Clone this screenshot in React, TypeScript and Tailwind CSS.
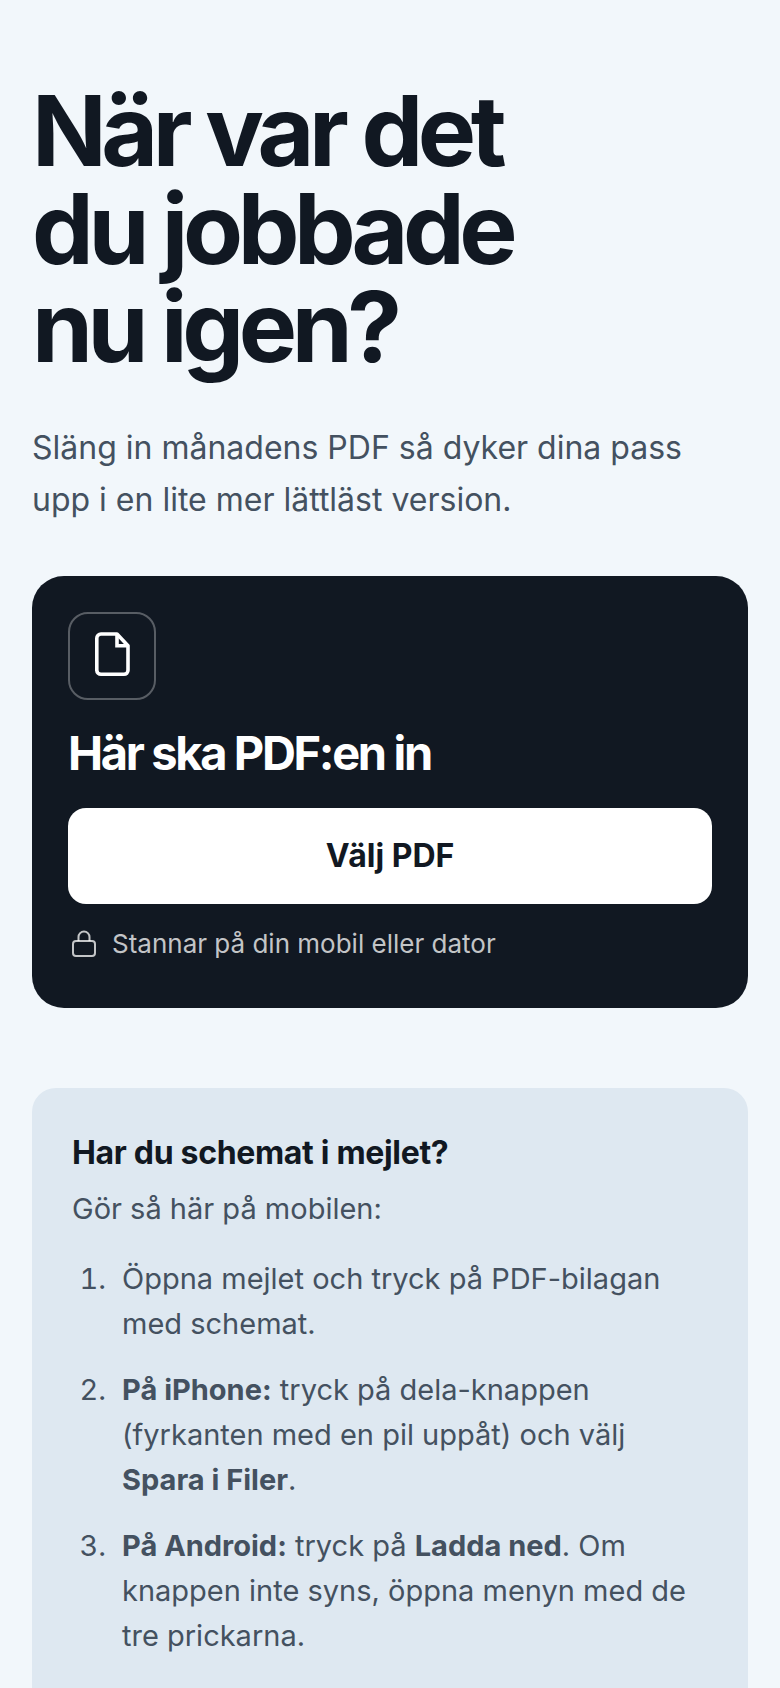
import type { ReactNode } from 'react';

function FileIcon() {
  return (
    <svg viewBox="0 0 48 48" className="size-12" fill="none" stroke="currentColor" strokeWidth="3.6" strokeLinejoin="round" aria-hidden="true">
      <path d="M13 2H29L40 13.700V38.300a4 4 0 0 1-4 4H13a4.200 4.200 0 0 1-4.200-4V6.200A4.200 4.200 0 0 1 13 2Z" />
      <path d="M29 2V13.700h11" strokeLinejoin="miter" />
    </svg>
  );
}

function LockIcon() {
  return (
    <svg viewBox="0 0 32 32" className="size-8 shrink-0" fill="none" stroke="currentColor" strokeWidth="2" aria-hidden="true">
      <rect x="5" y="13" width="22" height="15" rx="3" />
      <path d="M10.500 13V9a5.500 5.500 0 0 1 11 0v4" />
    </svg>
  );
}

const steps: ReactNode[] = [
  <>Öppna mejlet och tryck på PDF-bilagan med schemat.</>,
  <>
    <strong className="font-bold">På iPhone:</strong> tryck på dela-knappen (fyrkanten med en pil uppåt) och välj{' '}
    <strong className="font-bold">Spara i Filer</strong>.
  </>,
  <>
    <strong className="font-bold">På Android:</strong> tryck på <strong className="font-bold">Ladda ned</strong>. Om
    knappen inte syns, öppna menyn med de tre prickarna.
  </>,
  <>Kom tillbaka hit och tryck på Välj PDF.</>,
];

export default function App() {
  return (
    <main className="min-h-screen bg-[#f2f7fb] px-8 pt-[82px] pb-20 font-['Inter',sans-serif] text-[#111822]">
      <h1 className="text-[98px] leading-[98px] font-bold tracking-[-0.055em]">
        När var det
        <br />
        du jobbade
        <br />
        nu igen?
      </h1>
      <p className="mt-[46px] text-[32px] leading-[52px] text-[#445160]">
        Släng in månadens PDF så dyker dina pass upp i en lite mer lättläst version.
      </p>

      <section className="mt-[50px] rounded-[32px] bg-[#111822] p-9 pb-11 text-white">
        <div className="flex size-[88px] items-center justify-center rounded-[20px] border-2 border-white/30">
          <FileIcon />
        </div>
        <h2 className="mt-[27px] text-[47px] leading-[52px] font-bold tracking-[-0.05em]">Här ska PDF:en in</h2>
        <button type="button" className="mt-[29px] flex h-24 w-full items-center justify-center rounded-[18px] bg-white text-[32px] font-bold text-[#111822]">
          Välj PDF
        </button>
        <p className="mt-5 flex items-center gap-3 text-[26px] leading-10 text-white/75">
          <LockIcon />
          Stannar på din mobil eller dator
        </p>
      </section>

      <section className="mt-20 rounded-3xl bg-[#dee8f1] p-10 text-[29px] leading-[45px] text-[#445160]">
        <h2 className="text-[32px] leading-[50px] font-bold tracking-[-0.01em] text-[#111822]">Har du schemat i mejlet?</h2>
        <p className="mt-2">Gör så här på mobilen:</p>
        <ol className="mt-[25px] flex flex-col gap-[21px]">
          {steps.map((step, index) => (
            <li key={index} className="grid grid-cols-[34px_1fr] gap-4">
              <span className="text-right tabular-nums">{index + 1}.</span>
              <div>{step}</div>
            </li>
          ))}
        </ol>
      </section>
    </main>
  );
}
